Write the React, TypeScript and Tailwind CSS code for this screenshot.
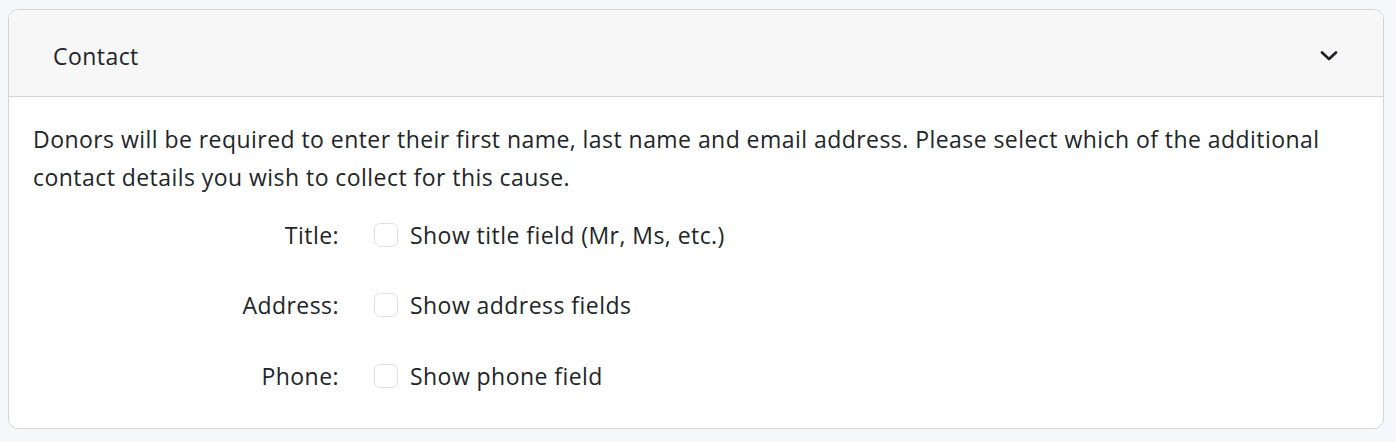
import React from "react";

function Row({ label, text, className }: { label: string; text: string; className?: string }) {
  return (
    <div className={"flex items-center " + (className ?? "")}>
      <div className="w-[306px] text-right">{label}</div>
      <div className="ml-[35px] w-[24px] h-[24px] rounded-[6px] border border-[#dee2e6] bg-white shrink-0" />
      <div className="ml-[12px]">{text}</div>
    </div>
  );
}

export default function App() {
  return (
    <div className="min-h-[442px] bg-[#f6f7fb] pt-[9px] pl-[8px] pr-[12px]" style={{ fontFamily: '"Open Sans", "Noto Sans", sans-serif' }}>
      <div className="w-[1376px] rounded-[10px] border border-[#d4d4d4] bg-white overflow-hidden text-[#212529] text-[23px] tracking-[0.45px]">
        <div className="h-[87px] bg-[#f7f7f7] border-b border-[#d4d4d4] flex items-center justify-between pl-[44px] pr-[44px] pt-[6px]">
          <span>Contact</span>
          <svg width="20" height="12" viewBox="0 0 20 12" fill="none">
            <path d="M3 2.5 L10 9 L17 2.5" stroke="#212529" strokeWidth="2.8" strokeLinecap="round" strokeLinejoin="round" />
          </svg>
        </div>
        <div className="px-[24px] pt-[23px] pb-[33px] leading-[38px]">
          <p>
            Donors will be required to enter their first name, last name and email address. Please select which of the additional contact details you wish to collect for this cause.
          </p>
          <Row label="Title:" text="Show title field (Mr, Ms, etc.)" className="mt-[20px]" />
          <Row label="Address:" text="Show address fields" className="mt-[32px]" />
          <Row label="Phone:" text="Show phone field" className="mt-[33px]" />
        </div>
      </div>
    </div>
  );
}
